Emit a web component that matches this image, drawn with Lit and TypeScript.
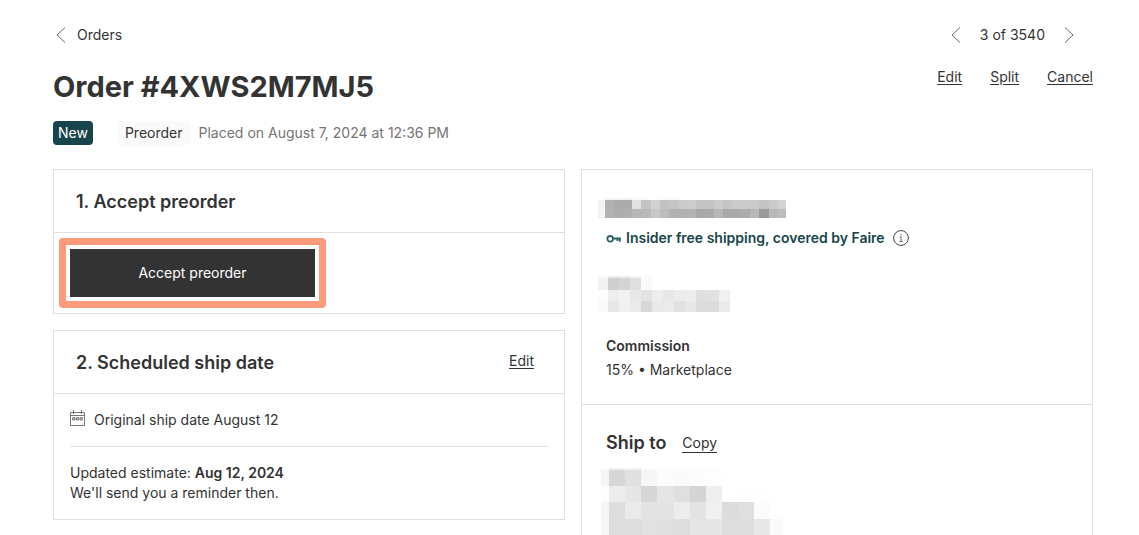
import { LitElement, html, css, svg } from "lit";
import { customElement, property } from "lit/decorators.js";

type Mosaic = { xs: number[]; ys: number[]; rows: string[] };

// Each row lists one two-digit hex grey per cell, xs and ys hold the cell edges.
const NAME: Mosaic = {
  xs: [0, 7, 16, 25, 34, 43, 53, 62, 71, 80, 89, 98, 107, 116, 125, 134, 143, 152, 161, 171, 180, 188],
  ys: [0, 2, 11, 20],
  rows: [
    "ff f4 f4 f0 fb fb ff fa fa ff ff ff ff ff ff ff ff ff ff ff ff",
    "f2 b0 aa ac e2 c4 d2 c2 c4 ca cc c4 c4 cb c6 cb cb c9 c4 ca d2",
    "f4 b3 ad b0 b7 b9 c7 bd b0 b0 b3 a8 aa b7 a8 a9 ac b8 9a b8 bd",
  ],
};

const CONTACT: Mosaic = {
  xs: [0, 10, 21, 32, 43, 54, 65, 76, 88, 98, 110, 121, 132],
  ys: [0, 2, 14, 25, 36],
  rows: [
    "f8 ea ee f3 fb ff ff ff ff ff ff ff",
    "f2 cf d4 df fa ff ff ff ff ff ff ff",
    "fd ee f2 e7 e3 ee e7 ec ed e0 e1 f0",
    "fa e7 f1 eb d8 e9 ea e1 e8 dc db ea",
  ],
};

const ADDRESS: Mosaic = {
  xs: [0, 8, 24, 40, 56, 73, 89, 105, 121, 137, 153, 169, 182],
  ys: [0, 2, 18, 34, 51, 67],
  rows: [
    "fa ef f1 fb fd fd fd fe ff ff ff ff",
    "f5 d6 e0 f6 fc fa fc fd ff ff ff ff",
    "fd ec e6 d6 e5 df d5 ee ff fe fe ff",
    "f5 dd ea e3 e3 ec e3 f0 dc df fb ff",
    "f7 dd dd e1 df dd e6 e6 dd dd e7 fa",
  ],
};

@customElement("redacted-block")
export class RedactedBlock extends LitElement {
  @property({ attribute: false }) data: Mosaic = NAME;

  static styles = css`
    :host { display: block; }
    svg { display: block; }
  `;

  render() {
    const { xs, ys, rows } = this.data;
    const w = xs[xs.length - 1];
    const h = ys[ys.length - 1];
    return html`<svg width=${w} height=${h} viewBox="0 0 ${w} ${h}" shape-rendering="crispEdges" aria-hidden="true">
      ${rows.map((row, r) =>
        row.split(" ").map(
          (g, c) => svg`<rect x=${xs[c]} y=${ys[r]} width=${xs[c + 1] - xs[c]} height=${ys[r + 1] - ys[r]} fill=${"#" + g + g + g}></rect>`
        )
      )}
    </svg>`;
  }
}

const chevron = (d: string) => html`<svg class="chevron" width="16" height="16" viewBox="0 0 16 16" aria-hidden="true">
  <path d=${d} fill="none" stroke="#666" stroke-width="1"></path>
</svg>`;
const LEFT = "M12 0.5 4 8l8 7.5";
const RIGHT = "M4 0.5 12 8l-8 7.5";

@customElement("app-root")
export class AppRoot extends LitElement {
  static styles = css`
    :host {
      display: block;
      background: #fff;
      color: #333;
      font: 14px/20px Inter, "Liberation Sans", sans-serif;
    }
    * { box-sizing: border-box; }
    h1, h2, h3, p { margin: 0; }
    a { color: inherit; }
    button { font: inherit; color: inherit; cursor: pointer; }
    svg { display: block; flex: none; }
    .page { padding: 25px 46px 0 53px; }
    .topbar { display: flex; justify-content: space-between; align-items: center; }
    .back { display: flex; align-items: center; gap: 8px; text-decoration: none; }
    .pager { display: flex; align-items: center; gap: 16px; padding-right: 16px; }
    .icon-button { padding: 0; border: 0; background: none; }
    .heading { display: flex; justify-content: space-between; align-items: flex-start; margin-top: 22px; }
    h1 { font-size: 29px; line-height: 40px; font-weight: 700; }
    .actions { display: flex; gap: 28px; }
    .link { padding: 0; border: 0; background: none; text-decoration: underline; text-underline-offset: 2px; }
    .meta { display: flex; align-items: center; margin-top: 14px; line-height: 24px; }
    .tag { border-radius: 4px; }
    .tag-new { padding: 0 5px; background: #17454b; color: #fff; }
    .tag-preorder { margin-left: 24px; padding: 0 8px; background: #fafafa; }
    .placed { margin-left: 8px; color: #757575; }
    .columns { display: grid; grid-template-columns: 1fr 1fr; gap: 16px; margin-top: 24px; }
    .stack { display: grid; gap: 16px; align-content: start; }
    .card { border: 1px solid #dfdfdf; }
    .card-head { display: flex; justify-content: space-between; align-items: flex-start; padding: 20px 30px 18px 22px; border-bottom: 1px solid #dfdfdf; }
    h2 { font-size: 18px; line-height: 24px; font-weight: 600; }
    .card-body { padding: 16px; }
    .primary {
      position: relative;
      display: block;
      min-width: 245px;
      height: 48px;
      border: 0;
      background: #333;
      color: #fff;
    }
    .primary::after {
      content: "";
      position: absolute;
      inset: -11px;
      border: 7px solid #ff9b7b;
      border-radius: 4px;
    }
    .date { display: flex; gap: 8px; padding-bottom: 16px; border-bottom: 1px solid #dfdfdf; }
    .estimate { padding-top: 16px; }
    strong, h3 { font-size: 14px; font-weight: 600; }
    .details { border-bottom: 0; }
    .customer { padding: 28px 24px 22px 16px; border-bottom: 1px solid #dfdfdf; }
    .insider { display: flex; align-items: center; gap: 4px; margin: 10px 0 28px; padding-left: 8px; color: #17454b; font-weight: 600; }
    .info { margin-left: 4px; }
    .commission { padding: 22px 0 0 8px; line-height: 24px; }
    .ship { padding: 26px 24px 0 19px; }
    .ship-head { display: flex; align-items: center; gap: 16px; margin-bottom: 13px; padding-left: 5px; }
    .copy { text-decoration: none; border-bottom: 1px solid #333; line-height: 18px; }
  `;

  render() {
    return html`
      <main class="page">
        <nav class="topbar">
          <a class="back" href="#orders">${chevron(LEFT)}Orders</a>
          <div class="pager">
            <button class="icon-button" aria-label="Previous order">${chevron(LEFT)}</button>
            <span>3 of 3540</span>
            <button class="icon-button" aria-label="Next order">${chevron(RIGHT)}</button>
          </div>
        </nav>
        <header class="heading">
          <h1>Order #4XWS2M7MJ5</h1>
          <div class="actions">
            <button class="link">Edit</button>
            <button class="link">Split</button>
            <button class="link">Cancel</button>
          </div>
        </header>
        <div class="meta">
          <span class="tag tag-new">New</span>
          <span class="tag tag-preorder">Preorder</span>
          <span class="placed">Placed on August 7, 2024 at 12:36 PM</span>
        </div>
        <div class="columns">
          <div class="stack">
            <section class="card">
              <div class="card-head"><h2>1. Accept preorder</h2></div>
              <div class="card-body"><button class="primary">Accept preorder</button></div>
            </section>
            <section class="card">
              <div class="card-head"><h2>2. Scheduled ship date</h2><button class="link">Edit</button></div>
              <div class="card-body">
                <div class="date">
                  <svg width="16" height="16" viewBox="0 0 16 16" fill="none" stroke="#555" aria-hidden="true">
                    <path d="M0.5 2.5h14v13h-14zM0.5 5.5h14M3.5 0v4M11.5 0v4" stroke-width="0.8"></path>
                    <path d="M2.7 7.7h2.2v2.2H2.7zM6.4 7.7h2.2v2.2H6.4zM10.1 7.7h2.2v2.2h-2.2z" stroke-width="0.9"></path>
                  </svg>
                  <span>Original ship date August 12</span>
                </div>
                <div class="estimate">
                  <p>Updated estimate: <strong>Aug 12, 2024</strong></p>
                  <p>We'll send you a reminder then.</p>
                </div>
              </div>
            </section>
          </div>
          <aside class="card details">
            <section class="customer">
              <redacted-block .data=${NAME}></redacted-block>
              <p class="insider">
                <svg width="16" height="16" viewBox="0 0 16 16" fill="none" stroke="#2b6066" stroke-width="1.8" aria-hidden="true">
                  <circle cx="4.2" cy="8.8" r="2.8"></circle>
                  <path d="M7 8.5h8M13.8 8.5v3.2M11.4 8.5v2.4"></path>
                </svg>
                <span>Insider free shipping, covered by Faire</span>
                <svg class="info" width="16" height="16" viewBox="0 0 16 16" fill="none" stroke="#444" aria-hidden="true">
                  <circle cx="8" cy="8" r="7.4" stroke-width="1"></circle>
                  <path d="M6.8 6.8H8v4.7M6.5 11.5h3M8 4v1.3" stroke-width="0.8"></path>
                </svg>
              </p>
              <redacted-block .data=${CONTACT}></redacted-block>
              <div class="commission">
                <h3>Commission</h3>
                <p>15% • Marketplace</p>
              </div>
            </section>
            <section class="ship">
              <div class="ship-head"><h2>Ship to</h2><button class="link copy">Copy</button></div>
              <redacted-block .data=${ADDRESS}></redacted-block>
            </section>
          </aside>
        </div>
      </main>
    `;
  }
}
